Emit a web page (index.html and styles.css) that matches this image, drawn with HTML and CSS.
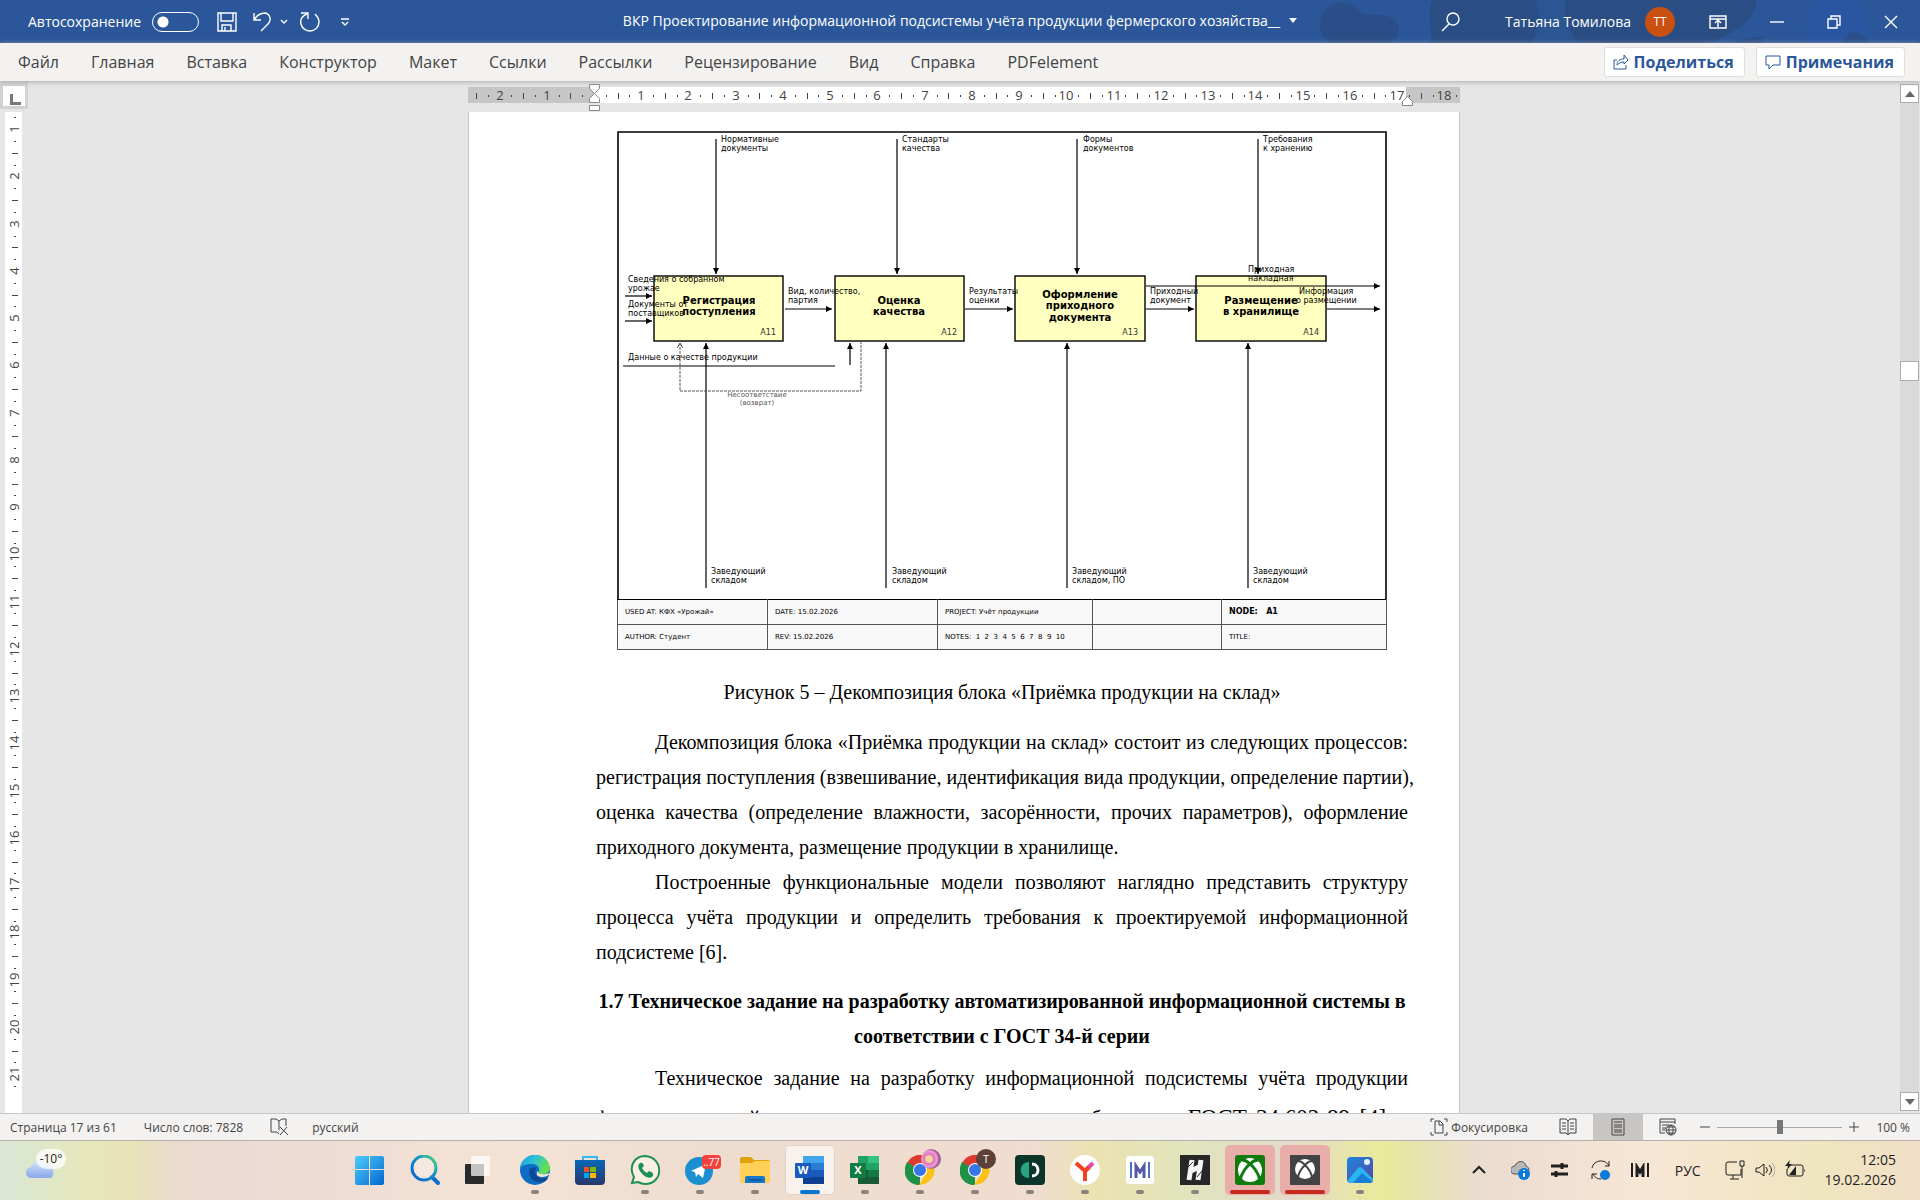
FILE: index.html
```html
<!DOCTYPE html>
<html lang="ru">
    <head>
        <meta charset="utf-8">
        <title>ВКР Проектирование информационной подсистемы</title>
        <link rel="stylesheet" href="styles.css">
    </head>
    <body>
        <header class="titlebar">
            <svg class="titlebar-art" width="620" height="43" viewBox="0 0 620 43" aria-hidden="true">
                <path fill="#2a4f88" d="M20 24C22 0 50-4 62 14c12 2 30-2 36 10 4 10-4 19-10 19H30c-6-4-11-10-10-19z"/>
                <path fill="#2a4e84" d="M132 0h325c-2 14-10 24-22 30-12 8-20 13-34 13H130c4-12-4-28 2-43z"/>
                <path fill="#2b5593" d="M236 0h30c-4 12 2 30 12 43h-46c8-12 8-30 4-43z"/>
                <path fill="#2a55a0" d="M520 0h38c10 14 14 30 8 43h-60c-4-16 2-34 14-43z"/>
                <path fill="#2a4f88" d="M543 43c2-12 18-15 25 0zM435 40l30-4-4 7h-26z"/>
            </svg>
            <div class="quick">
                <label class="autosave" for="autosave">Автосохранение</label>
                <input type="checkbox" id="autosave" class="switch">
                <button class="ico save" aria-label="Сохранить"><svg width="20" height="20" viewBox="0 0 20 20"><path d="M1 1h18v18H1zM4 1v8h12V1M5 19v-6h9v6M8 15v4"/></svg></button>
                <button class="ico undo" aria-label="Отменить"><svg width="20" height="20" viewBox="0 0 20 20"><path d="M2 1v7h7M2 8C5 3 9 1 13 1c5 1 7 7 3 11l-7 7"/></svg></button>
                <button class="ico undo-more" aria-label="Ещё"><svg width="8" height="20" viewBox="0 0 8 20"><path d="M1 8l3 3 3-3"/></svg></button>
                <button class="ico redo" aria-label="Повторить"><svg width="20" height="20" viewBox="0 0 20 20"><path d="M1 1h7v6M7 2C2 4 0 8 1 12c1 5 6 7 9 7 5 0 9-4 9-9 0-3-2-6-4-8"/></svg></button>
                <button class="ico custom" aria-label="Настройка панели"><svg width="10" height="20" viewBox="0 0 10 20"><path d="M1 7h8M2 10l3 3 3-3"/></svg></button>
            </div>
            <div class="doc-name">ВКР Проектирование информационной подсистемы учёта продукции фермерского хозяйства__ <span class="caret"></span></div>
            <div class="account">
                <button class="ico" aria-label="Поиск"><svg width="20" height="20" viewBox="0 0 20 20"><circle cx="12" cy="7" r="6"/><path d="M8 12l-7 7"/></svg></button>
                <span class="user">Татьяна Томилова</span>
                <span class="avatar">ТТ</span>
                <button class="ico ribbon" aria-label="Лента"><svg width="18" height="14" viewBox="0 0 18 14"><path d="M1 1h16v12H1zM1 4h16M9 12V6M6 8l3-3 3 3"/></svg></button>
                <button class="ico min" aria-label="Свернуть"><svg width="14" height="14" viewBox="0 0 14 14"><path d="M0 7h14"/></svg></button>
                <button class="ico restore" aria-label="Восстановить"><svg width="14" height="14" viewBox="0 0 14 14"><path d="M1 4h9v9H1zM4 4V1h9v9h-3"/></svg></button>
                <button class="ico close" aria-label="Закрыть"><svg width="14" height="14" viewBox="0 0 14 14"><path d="M1 1l12 12M13 1L1 13"/></svg></button>
            </div>
        </header>

        <nav class="tabs">
            <a href="#">Файл</a>
            <a href="#">Главная</a>
            <a href="#">Вставка</a>
            <a href="#">Конструктор</a>
            <a href="#">Макет</a>
            <a href="#">Ссылки</a>
            <a href="#">Рассылки</a>
            <a href="#">Рецензирование</a>
            <a href="#">Вид</a>
            <a href="#">Справка</a>
            <a href="#">PDFelement</a>
            <div class="tab-actions">
                <button class="action"><svg width="16" height="16" viewBox="0 0 16 16"><path d="M4 6H1v9h12v-4M4 11c0-4 3-6 7-6V1l4 5-4 4V8c-3 0-5 1-7 3z"/></svg>Поделиться</button>
                <button class="action"><svg width="16" height="16" viewBox="0 0 16 16"><path d="M1 2h14v9H8l-4 4v-4H1z"/></svg>Примечания</button>
            </div>
        </nav>

        <main class="workspace">
            <div class="side">
                <div class="tab-stop"><span></span></div>
                <div class="vruler"><svg id="vruler" width="17" height="1010"></svg></div>
            </div>
            <div class="canvas">
                <svg id="hruler" class="hruler" width="992" height="28"></svg>
                <article class="page">
                    <figure>
                        <svg class="idef" width="770" height="468" viewBox="0 0 770 468">
                            <defs>
                                <marker id="tip" viewBox="0 0 6 6" refX="6" refY="3" markerWidth="6" markerHeight="6" markerUnits="userSpaceOnUse" orient="auto"><path d="M0 0l6 3-6 3z"/></marker>
                                <marker id="tip-grey" viewBox="0 0 6 6" refX="6" refY="3" markerWidth="6" markerHeight="6" markerUnits="userSpaceOnUse" orient="auto"><path d="M1 0l5 3-5 3" fill="none" stroke="#555"/></marker>
                            </defs>
                            <path class="frame" d="M1 468V1h768v467"/>
                            <g class="box">
                                <rect x="37" y="145" width="129" height="65"/>
                                <rect x="218" y="145" width="129" height="65"/>
                                <rect x="398" y="145" width="130" height="65"/>
                                <rect x="579" y="145" width="130" height="65"/>
                            </g>
                            <g class="flow">
                                <path d="M99 8v135"/><path d="M280 8v135"/><path d="M460 8v135"/><path d="M641 8v135"/>
                                <path d="M89 457V212"/><path d="M269 457V212"/><path d="M450 457V212"/><path d="M631 457V212"/>
                                <path d="M8 165h27"/><path d="M8 190h27"/>
                                <path d="M168 178h47"/><path d="M348 178h48"/><path d="M529 178h48"/><path d="M710 178h53"/>
                                <path d="M529 155h234"/>
                                <path d="M233 234v-22"/>
                            </g>
                            <path class="line" d="M6 235h212"/>
                            <path class="return" d="M244 210v50H63v-48"/>
                            <g class="name">
                                <text x="102" y="173">Регистрация</text><text x="102" y="184">поступления</text>
                                <text x="282" y="173">Оценка</text><text x="282" y="184">качества</text>
                                <text x="463" y="167">Оформление</text><text x="463" y="178">приходного</text><text x="463" y="190">документа</text>
                                <text x="644" y="173">Размещение</text><text x="644" y="184">в хранилище</text>
                            </g>
                            <g class="code">
                                <text x="159" y="204">A11</text><text x="340" y="204">A12</text><text x="521" y="204">A13</text><text x="702" y="204">A14</text>
                            </g>
                            <g class="label">
                                <text x="104" y="11">Нормативные</text><text x="104" y="20">документы</text>
                                <text x="285" y="11">Стандарты</text><text x="285" y="20">качества</text>
                                <text x="466" y="11">Формы</text><text x="466" y="20">документов</text>
                                <text x="646" y="11">Требования</text><text x="646" y="20">к хранению</text>
                                <text x="94" y="443">Заведующий</text><text x="94" y="452">складом</text>
                                <text x="275" y="443">Заведующий</text><text x="275" y="452">складом</text>
                                <text x="455" y="443">Заведующий</text><text x="455" y="452">складом, ПО</text>
                                <text x="636" y="443">Заведующий</text><text x="636" y="452">складом</text>
                                <text x="11" y="151">Сведения о собранном</text><text x="11" y="160">урожае</text>
                                <text x="11" y="176">Документы от</text><text x="11" y="185">поставщиков</text>
                                <text x="171" y="163">Вид, количество,</text><text x="171" y="172">партия</text>
                                <text x="352" y="163">Результаты</text><text x="352" y="172">оценки</text>
                                <text x="533" y="163">Приходный</text><text x="533" y="172">документ</text>
                                <text x="631" y="141">Приходная</text><text x="631" y="150">накладная</text>
                                <text x="682" y="163">Информация</text><text x="679" y="172">о размещении</text>
                                <text x="11" y="229">Данные о качестве продукции</text>
                            </g>
                            <g class="note">
                                <text x="140" y="266">Несоответствие</text><text x="140" y="274">(возврат)</text>
                            </g>
                        </svg>
                        <table class="stamp">
                            <colgroup><col class="c1"><col class="c2"><col class="c3"><col class="c4"><col></colgroup>
                            <tr><td>USED AT: КФХ «Урожай»</td><td>DATE: 15.02.2026</td><td>PROJECT: Учёт продукции</td><td></td><td class="node">NODE: &nbsp; A1</td></tr>
                            <tr><td>AUTHOR: Студент</td><td>REV: 15.02.2026</td><td class="notes">NOTES:  1  2  3  4  5  6  7  8  9  10</td><td></td><td>TITLE:</td></tr>
                        </table>
                        <figcaption>Рисунок 5 – Декомпозиция блока «Приёмка продукции на склад»</figcaption>
                    </figure>
                    <p>Декомпозиция блока «Приёмка продукции на склад» состоит из следующих процессов: <span class="keep">регистрация поступления (взвешивание, идентификация вида продукции, определение партии),</span> оценка качества (определение влажности, засорённости, прочих параметров), оформление приходного документа, размещение продукции в хранилище.</p>
                    <p>Построенные функциональные модели позволяют наглядно представить структуру процесса учёта продукции и определить требования к проектируемой информационной подсистеме [6].</p>
                    <h2>1.7 Техническое задание на разработку автоматизированной информационной системы в соответствии с ГОСТ 34-й серии</h2>
                    <p class="full">Техническое задание на разработку информационной подсистемы учёта продукции фермерского хозяйства в соответствии с нормами разработано по <span class="big">ГОСТ 34.602-89 [4] и</span></p>
                </article>
            </div>
            <div class="scroll">
                <button class="sb" aria-label="Вверх"><svg width="10" height="6" viewBox="0 0 10 6"><path d="M0 6l5-6 5 6z"/></svg></button>
                <div class="track"><div class="thumb"></div></div>
                <button class="sb" aria-label="Вниз"><svg width="10" height="6" viewBox="0 0 10 6"><path d="M0 0l5 6 5-6z"/></svg></button>
            </div>
        </main>

        <footer class="status">
            <span class="st-page">Страница 17 из 61</span>
            <span class="st-words">Число слов: 7828</span>
            <svg class="st-proof" width="18" height="18" viewBox="0 0 18 18"><path d="M9 16l-2-2H1V1h5l3 2 3-2h4v7M9 3v9M10 9l8 8M17 9l-7 8"/></svg>
            <span>русский</span>
            <div class="views">
                <button class="focus"><svg width="18" height="18" viewBox="0 0 18 18"><path d="M4 1H1v3M14 1h3v3M4 17H1v-3M14 17h3v-3M5 3h5l3 3v9H5zM9 3v4h4"/></svg>Фокусировка</button>
                <button class="view" aria-label="Режим чтения"><svg width="18" height="18" viewBox="0 0 18 18"><path d="M9 3L7 1H1v14h6l2 2 2-2h6V1h-6zM9 3v13M3 5h4M3 8h4M3 11h4M11 5h4M11 8h4M11 11h4"/></svg></button>
                <button class="view active" aria-label="Разметка страницы"><svg width="16" height="18" viewBox="0 0 16 18"><path d="M2 1h12v16H2zM4 4h8M4 7h8M4 9h8M4 12h8M4 14h8"/></svg></button>
                <button class="view" aria-label="Веб-документ"><svg width="18" height="18" viewBox="0 0 18 18"><path d="M6 15H1V1h15v5M1 4h15M3 7h7M3 10h4M3 12h3"/><circle cx="12" cy="12" r="5" fill="#f3f2f1"/><path d="M7 12h10M12 7c-3 3-3 7 0 10M12 7c3 3 3 7 0 10M8 9h8M8 15h8"/></svg></button>
            </div>
            <button class="sign" aria-label="Уменьшить"><svg width="10" height="10" viewBox="0 0 10 10"><path d="M0 5h10"/></svg></button>
            <input class="zoom" type="range" min="0" max="100" value="50" aria-label="Масштаб">
            <button class="sign" aria-label="Увеличить"><svg width="10" height="10" viewBox="0 0 10 10"><path d="M0 5h10M5 0v10"/></svg></button>
            <span class="percent">100 %</span>
        </footer>

        <div class="taskbar">
            <div class="weather">
                <svg width="32" height="20" viewBox="0 0 32 20"><defs><linearGradient id="cl" x2="0" y2="1"><stop stop-color="#dbe8fb"/><stop offset="1" stop-color="#86a8ea"/></linearGradient></defs><path fill="url(#cl)" d="M7 19c-8 0-8-10-1-11C8 0 18-1 20 5c8-2 12 14 4 14z"/></svg>
                <span class="temp">-10°</span>
            </div>
            <div class="apps">
                <button class="app" aria-label="Пуск"><svg viewBox="0 0 30 30"><defs><linearGradient id="wn" x2="1" y2="1"><stop stop-color="#4fcdfb"/><stop offset="1" stop-color="#0067d0"/></linearGradient></defs><path fill="url(#wn)" d="M2 1h12v13H0V3q0-2 2-2zM15 1h12q2 0 2 2v11H15zM0 15h14v15H2q-2 0-2-2zM15 15h14v13q0 2-2 2H15z"/></svg></button>
                <button class="app" aria-label="Поиск"><svg viewBox="0 0 30 30"><defs><linearGradient id="sr" x1="1" y1="0" x2="0" y2="1"><stop stop-color="#5bd86a"/><stop offset=".4" stop-color="#1597c8"/><stop offset="1" stop-color="#0a5fd0"/></linearGradient></defs><path d="M22 22l6 6" stroke="#0f6fca" stroke-width="4" stroke-linecap="round"/><circle cx="14" cy="13" r="12" fill="#fff" fill-opacity=".25" stroke="url(#sr)" stroke-width="3"/></svg></button>
                <button class="app" aria-label="Представление задач"><svg viewBox="0 0 30 30"><rect x="0" y="9" width="19" height="20" rx="1" fill="#2b2b2b"/><rect x="6" y="1" width="19" height="20" rx="1" fill="#fff" fill-opacity=".72"/></svg></button>
                <button class="app run" aria-label="Edge"><svg viewBox="0 0 30 30"><defs><linearGradient id="eg" x2="1" y2=".4"><stop stop-color="#1b9de2"/><stop offset=".5" stop-color="#2fc2d6"/><stop offset="1" stop-color="#66e04f"/></linearGradient></defs><circle cx="15" cy="15" r="15" fill="#0f6cc4"/><path fill="url(#eg)" d="M0 13C2-4 28-5 30 13c0 6-8 8-12 5 3-4 0-9-6-9-5 0-10 1-12 4z"/><path fill="#0c4a94" d="M10 14c-3 8 4 15 14 13 2-1 4-3 4-5-6 3-12 1-13-5 0-2 1-3 1-4-2-1-5 0-6 1z"/><path fill="#f5e4d8" d="M30 18c-1 3-5 4-9 4-5-1-5-4-3-6 0 4 5 4 12 2z"/></svg></button>
                <button class="app" aria-label="Магазин"><svg viewBox="0 0 30 30"><defs><linearGradient id="st" x2="0" y2="1"><stop stop-color="#0a67b8"/><stop offset="1" stop-color="#27376b"/></linearGradient></defs><path d="M8 7V2h14v5" fill="none" stroke="#33b8f2" stroke-width="2"/><path fill="url(#st)" d="M0 5h30v21q0 4-4 4H4q-4 0-4-4z"/><path fill="#f25022" d="M9 12h5v5H9z"/><path fill="#7fba00" d="M15 12h6v5h-6z"/><path fill="#00a4ef" d="M9 18h5v5H9z"/><path fill="#ffb900" d="M15 18h6v5h-6z"/></svg></button>
                <button class="app run" aria-label="WhatsApp"><svg viewBox="0 0 30 30"><path fill="#fbeee4" stroke="#1c8f52" stroke-width="2" d="M2 28l2-6C-2 11 5 1 15 1c19 1 19 28 0 28-3 0-5-1-7-2z"/><path fill="#1c8f52" d="M10 8c-6 4 6 18 12 14 3-3 0-5-3-6l-2 2c-2-1-4-3-5-5l2-2c-1-3-2-4-4-3z"/></svg></button>
                <button class="app run" aria-label="Telegram"><svg viewBox="0 0 30 30"><circle cx="14" cy="16" r="14" fill="#1c8fd0"/><path fill="#fff" d="M6 16l15-7-3 14-5-4-2 3-1-5z"/></svg><span class="count">..77</span></button>
                <button class="app run" aria-label="Проводник"><svg viewBox="0 0 30 30"><path fill="#e0a10e" d="M0 4q0-2 2-2h9l3 3h14q2 0 2 2v4H0z"/><path fill="#ffd055" d="M0 8h12l3-2h15v20q0 2-2 2H2q-2 0-2-2z"/><path fill="#1477c8" d="M5 28v-5q0-2 2-2h16q2 0 2 2v5z"/><path stroke="#0b3f78" d="M9 25h13"/></svg></button>
                <button class="app run current" aria-label="Word"><svg viewBox="0 0 30 30"><path fill="#41a5ee" d="M8 1h21v7H8z"/><path fill="#2b7cd3" d="M8 8h21v7H8z"/><path fill="#185abd" d="M8 15h21v7H8z"/><path fill="#103f91" d="M8 22h21v7H8z"/><rect y="8" width="16" height="15" rx="1" fill="#185abd"/><text x="8" y="19" class="tile">W</text></svg></button>
                <button class="app run" aria-label="Excel"><svg viewBox="0 0 30 30"><path fill="#21a366" d="M8 1h10v14H8z"/><path fill="#33c481" d="M18 1h11v7H18z"/><path fill="#21a366" d="M18 8h11v7H18z"/><path fill="#107c41" d="M18 15h11v7H18z"/><path fill="#185c37" d="M8 15h10v7h11v7H8z"/><rect y="8" width="16" height="15" rx="1" fill="#107c41"/><text x="8" y="19" class="tile">X</text></svg></button>
                <button class="app run" aria-label="Chrome"><svg viewBox="0 0 30 30"><path fill="#de3b30" d="M15 15L2 8C8-3 23-3 28 8z"/><path fill="#1f9247" d="M15 15l0 15C2 30-4 18 2 7z"/><path fill="#fbc116" d="M15 8h13c5 10-2 22-14 22l8-13z"/><circle cx="15" cy="15" r="7" fill="#fff"/><circle cx="15" cy="15" r="6" fill="#3577e8"/></svg><span class="face pink"></span></button>
                <button class="app run" aria-label="Chrome"><svg viewBox="0 0 30 30"><path fill="#de3b30" d="M15 15L2 8C8-3 23-3 28 8z"/><path fill="#1f9247" d="M15 15l0 15C2 30-4 18 2 7z"/><path fill="#fbc116" d="M15 8h13c5 10-2 22-14 22l8-13z"/><circle cx="15" cy="15" r="7" fill="#fff"/><circle cx="15" cy="15" r="6" fill="#3577e8"/></svg><span class="face brown">Т</span></button>
                <button class="app run" aria-label="PDFelement"><svg viewBox="0 0 30 30"><rect width="30" height="30" rx="4" fill="#0a3528"/><path fill="#27a582" d="M14 7v16C3 23 3 7 14 7z"/><path d="M17 9c8 0 8 12 0 12" fill="none" stroke="#fff" stroke-width="3"/></svg></button>
                <button class="app run" aria-label="Яндекс"><svg viewBox="0 0 30 30"><circle cx="15" cy="15" r="15" fill="#fff"/><path d="M6 8l9 8v10" fill="none" stroke="#f4421f" stroke-width="4"/><path d="M15 16l8-8" stroke="#e846b0" stroke-width="4"/><path d="M15 16l4-4" stroke="#f4421f" stroke-width="4"/></svg></button>
                <button class="app run" aria-label="МойСклад"><svg viewBox="0 0 30 30"><rect x="1" y="1" width="28" height="28" rx="3" fill="#fff"/><path d="M6 7v16M24 7v16" stroke="#4a70bd" stroke-width="2"/><path d="M11 23V11l4 6 4-6v12" fill="none" stroke="#5557a8" stroke-width="3"/></svg></button>
                <button class="app run" aria-label="H"><svg viewBox="0 0 30 30"><path fill="#272727" d="M0 0h30v30H0z"/><path d="M12 5L9 25M21 5l-3 20M9 17l12-6" stroke="#f4f4f4" stroke-width="5"/><path d="M8 12l5-5M17 22l5-6" stroke="#272727"/></svg></button>
                <button class="app run alert" aria-label="Xbox"><svg viewBox="0 0 30 30"><rect width="30" height="30" rx="3" fill="#107c10"/><circle cx="15" cy="15" r="12" fill="#fff"/><path fill="none" stroke="#107c10" stroke-width="3" d="M5 25C7 17 12 11 15 9c3 2 8 8 10 16"/><path fill="none" stroke="#107c10" stroke-width="3" d="M7 5c4 0 6 2 8 4 2-2 4-4 8-4"/></svg></button>
                <button class="app run alert" aria-label="Xbox Game Bar"><svg viewBox="0 0 30 30"><path fill="#434343" d="M0 0h30v30H0z"/><circle cx="15" cy="14" r="10" fill="#fff"/><path fill="none" stroke="#434343" stroke-width="2" d="M8 22c1-6 5-10 7-12 2 2 6 6 7 12M8 6c4 0 5 2 7 4 2-2 3-4 7-4"/></svg></button>
                <button class="app run" aria-label="Фотографии"><svg viewBox="0 0 30 30"><defs><linearGradient id="ph" x2="1" y2="1"><stop stop-color="#1d87dc"/><stop offset="1" stop-color="#5546a8"/></linearGradient></defs><rect x="2" y="2" width="26" height="26" rx="4" fill="url(#ph)"/><circle cx="22" cy="7" r="3" fill="#e6f1ff"/><path fill="#28b5f0" d="M3 25l10-12q2-2 4 0l11 11q0 4-4 4H6q-3 0-3-3z"/><path fill="#1a7ed4" d="M8 28l9-10 11 9-3 1z"/></svg></button>
            </div>
            <div class="tray">
                <svg width="20" height="14" viewBox="0 0 20 14"><path d="M2 10l6-6 6 6" stroke-width="2"/></svg>
                <svg width="20" height="20" viewBox="0 0 20 20"><path fill="#b8b8b8" stroke="#555" d="M3 14c-5-1-4-8 1-8C6 0 14 0 15 6c4 1 4 8-1 8z"/><circle cx="13" cy="14" r="6" fill="#0a7bd8" stroke="none"/><path d="M13 13v4M13 10v1" stroke="#fff" stroke-width="2"/></svg>
                <svg width="20" height="18" viewBox="0 0 20 18"><path d="M0 5h17M0 13h17" stroke-width="3"/><path d="M11 2v6M5 10v6" stroke-width="3"/></svg>
                <svg width="20" height="20" viewBox="0 0 20 20"><path d="M1 8C3-1 15-1 18 6V1M18 6h-4M1 19v-5h5M2 14c2 4 5 5 8 5"/><circle cx="14" cy="15" r="5" fill="#0a7bd8" stroke="none"/></svg>
                <svg width="20" height="14" viewBox="0 0 20 14"><path d="M1 0v14M17 0v14" stroke-width="2"/><path d="M6 14V4l3 5 3-5v10" stroke-width="3"/></svg>
                <span class="lang">РУС</span>
                <svg width="20" height="20" viewBox="0 0 20 20"><path d="M12 2H3Q1 2 1 4v9q0 2 2 2h13V9M8 15v4M5 19h9M15 1h4v5h-4zM17 6v12"/></svg>
                <svg width="20" height="20" viewBox="0 0 20 20"><path d="M1 8h3l5-4v12l-5-4H1zM11 7q3 3 0 6M14 5q5 5 0 10"/><path d="M17 3q6 7 0 14" stroke="#b5a898"/></svg>
                <svg width="20" height="20" viewBox="0 0 20 20"><path d="M5 5h11q2 0 2 2v7q0 2-2 2H4q-2 0-2-2V9M20 9v3"/><path fill="#222" d="M4 15l7-9v9zM5 0L0 6h3L2 10l5-6H4z" stroke="none"/></svg>
                <div class="clock">12:05<br>19.02.2026</div>
            </div>
        </div>

        <script>
            var NS = 'http://www.w3.org/2000/svg';
            var CM = 120 / 2.54; // one centimetre at 120 dpi

            function add(parent, tag, attrs, text) {
                var el = document.createElementNS(NS, tag);
                for (var key in attrs) el.setAttribute(key, attrs[key]);
                if (text) el.textContent = text;
                parent.appendChild(el);
                return el;
            }

            function drawHorizontal() {
                var svg = document.getElementById('hruler');
                var zero = 126, end = 938;
                add(svg, 'rect', {x: 0, y: 3, width: 992, height: 16, fill: '#c6c6c6'});
                add(svg, 'rect', {x: zero, y: 3, width: end - zero, height: 16, fill: '#fff'});
                for (var q = -10; q <= 73; q++) {
                    var x = Math.round(zero + q * CM / 4);
                    if (q === 0) continue;
                    if (q % 4 === 0) add(svg, 'text', {x: x, y: 16, 'text-anchor': 'middle'}, String(Math.abs(q / 4)));
                    else if (q % 2 === 0) add(svg, 'rect', {x: x, y: 9, width: 1, height: 6});
                    else add(svg, 'rect', {x: x, y: 11, width: 1, height: 2});
                }
                add(svg, 'path', {d: 'M121.5 .5h10v4l-5 5-5-5zM126.5 9.5l5 5v4h-10v-4zM121.5 21.5h10v5h-10z', 'class': 'mark'});
                add(svg, 'path', {d: 'M939.5 12.5l5 5v4h-10v-4z', 'class': 'mark'});
            }

            function drawVertical() {
                var svg = document.getElementById('vruler');
                for (var q = 3; q <= 85; q++) {
                    var y = Math.round(q * CM / 4) - 30;
                    if (q % 4 === 0) add(svg, 'text', {transform: 'translate(14 ' + y + ') rotate(-90)', 'text-anchor': 'middle'}, String(q / 4));
                    else if (q % 2 === 0) add(svg, 'rect', {x: 7, y: y, width: 6, height: 1});
                    else add(svg, 'rect', {x: 9, y: y, width: 2, height: 1});
                }
            }

            drawHorizontal();
            drawVertical();
        </script>
    </body>
</html>
```
FILE: styles.css
```css
*{
    box-sizing: border-box;
}
body{
    margin: 0;
    height: 100vh;
    display: flex;
    flex-direction: column;
    overflow: hidden;
    background: #e6e6e6;
    font-family: "Open Sans", "Noto Sans", sans-serif;
    font-size: 14px;
    color: #444;
}
button{
    border: 0;
    padding: 0;
    background: none;
    font: inherit;
    color: inherit;
}
svg{
    display: block;
    flex: none;
}

/* title bar */
.titlebar{
    position: relative;
    height: 43px;
    flex: none;
    display: grid;
    grid-template-columns: 1fr auto 1fr;
    align-items: center;
    background: #2b579a;
    color: #fff;
    white-space: nowrap;
}
.titlebar-art{
    position: absolute;
    top: 0;
    right: 0;
}
.quick, .account{
    position: relative;
    display: flex;
    align-items: center;
}
.quick{
    padding-left: 28px;
}
.account{
    justify-content: flex-end;
    padding-right: 22px;
}
.ico svg, .action svg, .status svg, .tray svg{
    fill: none;
    stroke: currentColor;
}
.ico svg{
    stroke-width: 1.4;
}
.switch{
    appearance: none;
    width: 47px;
    height: 20px;
    margin: 0 0 0 11px;
    border: 1px solid #fff;
    border-radius: 10px;
    background: radial-gradient(circle at 10px 9px, #fff 5px, transparent 6px);
}
.save{
    margin-left: 18px;
}
.undo{
    margin-left: 15px;
}
.undo-more{
    margin-left: 8px;
}
.redo{
    margin-left: 12px;
}
.custom{
    margin-left: 20px;
}
.doc-name{
    display: flex;
    align-items: center;
    gap: 9px;
    padding-bottom: 3px;
    position: relative;
}
.caret{
    border: 4px solid transparent;
    border-top: 5px solid #fff;
    border-bottom: 0;
}
.user{
    margin-left: 44px;
}
.avatar{
    width: 30px;
    height: 30px;
    margin-left: 14px;
    border-radius: 15px;
    background: #ca5010;
    font-size: 12px;
    line-height: 30px;
    text-align: center;
}
.ribbon{
    margin-left: 34px;
}
.min, .restore, .close{
    margin-left: 43px;
}

/* ribbon tabs */
.tabs{
    position: relative;
    height: 38px;
    flex: none;
    display: flex;
    align-items: center;
    gap: 32px;
    padding: 0 15px 0 18px;
    background: #f3f2f1;
    box-shadow: 0 1px 5px #aaa;
    font-size: 16px;
}
.tabs a{
    color: #444;
    text-decoration: none;
}
.tab-actions{
    display: flex;
    gap: 11px;
    margin-left: auto;
}
.action{
    display: flex;
    align-items: center;
    gap: 5px;
    height: 30px;
    padding: 0 10px 0 8px;
    border: 1px solid #e1dfdd;
    border-radius: 3px;
    background: #fff;
    color: #2b579a;
    font-weight: bold;
}

/* rulers */
.workspace{
    flex: 1;
    min-height: 0;
    display: flex;
}
.side{
    width: 28px;
    display: flex;
    flex-direction: column;
}
.tab-stop{
    height: 28px;
    flex: none;
    margin-bottom: 3px;
    padding: 5px 3px 3px;
    background: #d2d2d2;
}
.tab-stop span{
    display: block;
    height: 20px;
    background: #fdfdfd;
    padding: 8px 0 0 7px;
}
.tab-stop span::before{
    content: "";
    display: block;
    width: 8px;
    height: 8px;
    border: solid #777;
    border-width: 0 0 3px 3px;
}
.vruler{
    flex: 1;
    width: 17px;
    margin-left: 5px;
    overflow: hidden;
    background: #fff;
}
.vruler svg, .hruler{
    fill: #444;
    font-size: 13px;
}
.hruler{
    margin-top: 3px;
}
.mark{
    fill: #fff;
    stroke: #888;
}

/* document */
.canvas{
    flex: 1;
    display: flex;
    flex-direction: column;
    align-items: center;
    overflow: hidden;
}
.page{
    flex: none;
    width: 992px;
    padding: 19px 51px 0 127px;
    border: solid #c6c6c6;
    border-width: 0 1px;
    background: #fff;
    color: #000;
    font-family: "Liberation Serif", serif;
    font-size: 20px;
    line-height: 35px;
}
.page p, .page h2{
    margin: 0;
}
.page p{
    text-indent: 59px;
    text-align: justify;
}
.page .full{
    text-align-last: justify;
}
.page h2{
    padding: 14px 0 7px;
    font-size: 20px;
    text-align: center;
}
.keep{
    white-space: nowrap;
}
.big{
    font-size: 23px;
    line-height: 44px;
}
figure{
    margin: 0;
    padding-left: 21px;
}
figcaption{
    width: 770px;
    padding: 25px 0 15px;
    text-align: center;
}
.idef{
    font-family: "DejaVu Sans", sans-serif;
}
.frame{
    fill: none;
    stroke: #000;
    stroke-width: 1.6;
}
.box{
    fill: #ffffbf;
    stroke: #000;
    stroke-width: 1.4;
}
.flow path, .line{
    stroke: #000;
    stroke-width: 1.2;
}
.flow path{
    marker-end: url(#tip);
}
.return{
    fill: none;
    stroke: #555;
    stroke-dasharray: 3 1;
    marker-end: url(#tip-grey);
}
.name{
    font-size: 10px;
    font-weight: bold;
    text-anchor: middle;
}
.label{
    font-size: 8px;
}
.code{
    font-size: 8px;
    text-anchor: end;
    fill: #333;
}
.note{
    font-size: 7px;
    text-anchor: middle;
    fill: #555;
}
.stamp{
    width: 770px;
    table-layout: fixed;
    border-collapse: collapse;
    border: 1px solid #000;
    background: #f8f8f8;
    font-family: "DejaVu Sans", sans-serif;
    font-size: 7px;
    line-height: 24px;
}
.stamp td{
    height: 25px;
    padding: 0 7px;
    border: 1px solid #555;
}
.stamp tr:first-child td{
    border-top-color: #000;
}
.stamp .node{
    font-size: 8px;
    font-weight: bold;
}
.stamp .notes{
    white-space: pre;
}
.c1{
    width: 150px;
}
.c2{
    width: 170px;
}
.c3{
    width: 155px;
}
.c4{
    width: 129px;
}

/* scroll bar */
.scroll{
    width: 20px;
    padding: 3px 1px 2px 0;
    display: flex;
    flex-direction: column;
}
.sb{
    height: 19px;
    display: flex;
    align-items: center;
    justify-content: center;
    border: 1px solid #ababab;
    background: #fff;
    fill: #666;
}
.track{
    flex: 1;
    padding-top: 258px;
    background: #dadada;
}
.thumb{
    height: 20px;
    border: 1px solid #ababab;
    background: #fff;
}

/* status bar */
.status{
    height: 28px;
    flex: none;
    display: flex;
    align-items: center;
    padding: 0 10px;
    border-top: 1px solid #c6c6c6;
    border-bottom: 1px solid #b5b0ac;
    background: #f3f2f1;
    font-size: 12px;
    white-space: nowrap;
}
.st-words{
    margin-left: 27px;
}
.st-proof{
    margin: 0 24px 0 27px;
}
.views{
    display: flex;
    align-items: center;
    margin-left: auto;
}
.focus{
    display: flex;
    align-items: center;
    gap: 3px;
    margin-right: 15px;
}
.view{
    width: 50px;
    height: 26px;
    display: flex;
    align-items: center;
    justify-content: center;
}
.active{
    background: #c8c6c4;
}
.sign{
    width: 18px;
    display: flex;
    justify-content: center;
}
.views + .sign{
    margin-left: 3px;
}
.zoom{
    appearance: none;
    width: 125px;
    height: 14px;
    margin: 0 3px;
    background: linear-gradient(#aaa, #aaa) center / 100% 1px no-repeat;
}
.zoom::-webkit-slider-thumb{
    appearance: none;
    width: 6px;
    height: 14px;
    background: #777;
}
.percent{
    width: 47px;
    text-align: right;
}

/* task bar */
.taskbar{
    height: 59px;
    flex: none;
    display: flex;
    padding-top: 4px;
    background: linear-gradient(90deg, #dae7d5 0, #e7e7b9 5%, #e8e2b8 7%, #eadbcd 9%, #ecdad4 13%, #f4e3d4 27%, #eedccf 38%, #f0ddd0 54%, #ebe2b0 57%, #e1e4be 62%, #e3dacb 67%, #ebeb9b 72%, #e6e6a6 73%, #ebdcd0 77%, #f8e6d5 86%, #efe5bf 95%, #f1dfc8 100%);
    color: #1f1f1f;
}
.weather{
    position: relative;
    width: 345px;
    flex: none;
    padding: 14px 0 0 25px;
}
.temp{
    position: absolute;
    top: 4px;
    left: 36px;
    width: 30px;
    height: 20px;
    border-radius: 10px;
    background: rgba(255, 255, 255, .75);
    font-size: 12px;
    line-height: 20px;
    text-align: center;
}
.apps{
    display: flex;
    gap: 5px;
}
.app{
    position: relative;
    width: 50px;
    height: 50px;
    display: flex;
    flex-direction: column;
    align-items: center;
    padding-top: 10px;
    border-radius: 5px;
}
.app svg{
    width: 30px;
    height: 30px;
    margin-bottom: 5px;
}
.run::after{
    content: "";
    width: 8px;
    height: 4px;
    border-radius: 2px;
    background: #8a827c;
}
.current{
    background: rgba(255, 255, 255, .6);
    box-shadow: 0 0 0 1px #e2d3ca inset;
}
.current::after{
    width: 20px;
    background: #0b74d1;
}
.alert{
    background: #e9aeaa;
}
.alert::after{
    width: 40px;
    background: #c42b1c;
}
.tile{
    fill: #fff;
    font-size: 11px;
    font-weight: bold;
    text-anchor: middle;
}
.count, .face{
    position: absolute;
    color: #fff;
    text-align: center;
}
.count{
    top: 10px;
    left: 27px;
    width: 19px;
    height: 14px;
    border-radius: 4px;
    background: #f5413b;
    font-size: 10px;
    line-height: 14px;
}
.face{
    top: 4px;
    left: 26px;
    width: 20px;
    height: 20px;
    border-radius: 10px;
    font-size: 11px;
    line-height: 20px;
}
.pink{
    background: radial-gradient(circle at 8px 10px, #f1d79a 3px, #e070bc 5px, #e9a3d2 8px, #a85c9b 10px);
}
.brown{
    background: #5d4037;
}
.tray{
    display: flex;
    align-items: center;
    gap: 20px;
    height: 50px;
    margin-left: auto;
    padding-right: 24px;
}
.lang{
    margin: 0 4px 0 4px;
}
.lang ~ svg{
    margin-right: -10px;
}
.clock{
    margin-left: 10px;
    line-height: 20px;
    text-align: right;
}
```
